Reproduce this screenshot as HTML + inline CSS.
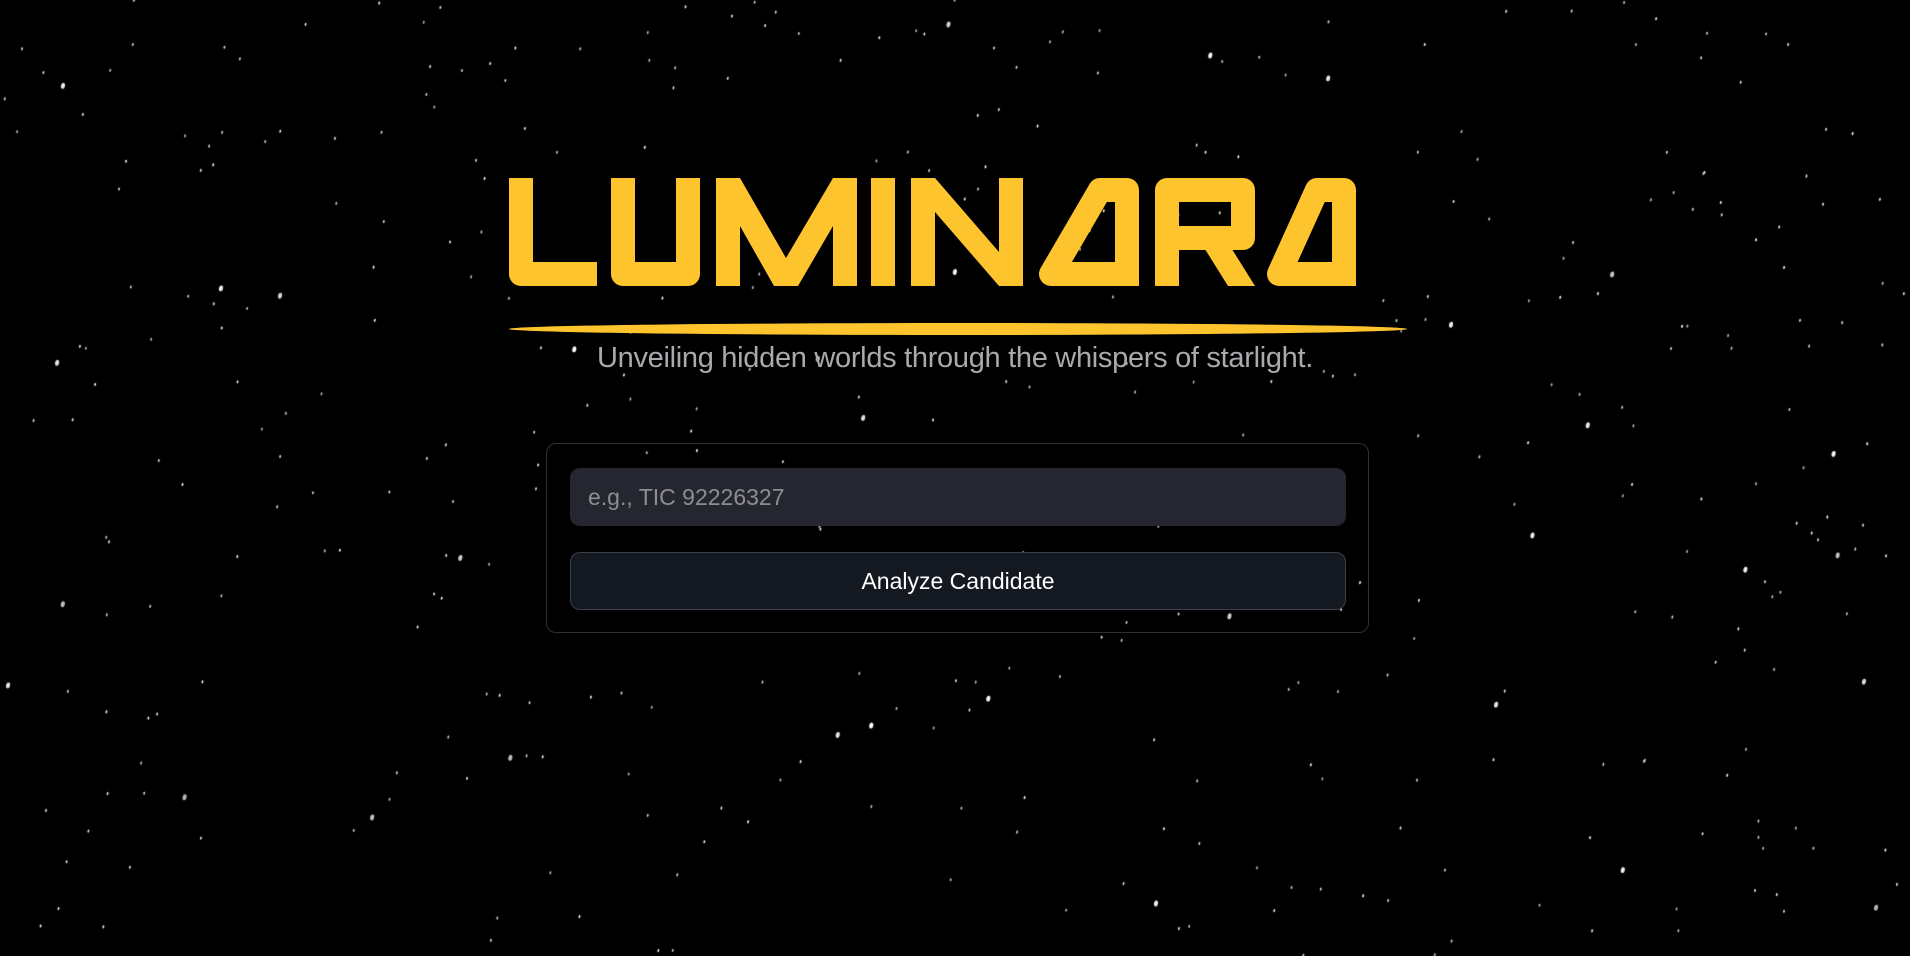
<!DOCTYPE html>
<html><head><meta charset="utf-8"><style>
html,body{margin:0;padding:0;background:#000;width:1910px;height:956px;overflow:hidden;font-family:"Liberation Sans",Roboto,sans-serif}
canvas{position:absolute;left:0;top:0}
.sub{position:absolute;left:0;width:1910px;top:342px;text-align:center;color:#a9a9ae;font-size:29px;letter-spacing:-0.3px}
.card{position:absolute;left:546px;top:443px;width:821px;height:188px;border:1px solid #2f2f33;border-radius:10px}
.inp{position:absolute;left:23px;top:24px;width:776px;height:58px;background:#262630;border-radius:10px;color:#8d8d94;font-size:23px;line-height:58px;padding-left:18px;box-sizing:border-box}
.btn{position:absolute;left:23px;top:108px;width:776px;height:58px;background:#131821;border:1px solid #3a3f48;border-radius:10px;box-sizing:border-box;color:#fff;font-size:23px;line-height:56px;text-align:center}
</style></head><body>
<canvas id="c" width="1910" height="956"></canvas>
<svg style="position:absolute;left:0;top:0" width="1910" height="956" viewBox="0 0 1910 956">
<g fill="none" stroke="#fec42e" stroke-width="24" stroke-linejoin="round">
<path d="M521 178 V274 H597"/>
<path d="M623 178 V274 H688 V178"/>
<path d="M883 178 V286"/>
<path d="M1127 286 V190 H1100 L1051 274 H1127"/>
<path d="M1167 286 V190 H1243 V238 H1167"/>
<path d="M1344 286 V190 H1317 L1279 274 H1344"/>
</g>
<g fill="#fec42e">
<polygon points="716,286 716,178 740,178 786,258 833,178 857,178 857,286 833,286 833,226 798,286 774,286 740,226 740,286"/>
<polygon points="911,286 911,178 935,178 999,252 999,178 1023,178 1023,286 999,286 935,212 935,286"/>
<polygon points="1203,246 1230,246 1255,286 1228,286"/>
<ellipse cx="958" cy="329" rx="449" ry="6"/>
</g>
</svg>
<div class="sub">Unveiling hidden worlds through the whispers of starlight.</div>
<div class="card"><div class="inp">e.g., TIC 92226327</div><div class="btn">Analyze Candidate</div></div>
<script>
var c=document.getElementById('c').getContext('2d');var s=12345;function r(){s=(s*16807)%2147483647;return s/2147483647;}
for(var i=0;i<420;i++){var x=r()*1910,y=r()*956,sz=r();c.fillStyle='rgba(255,255,255,'+(0.7+r()*0.3)+')';c.beginPath();c.ellipse(x,y,sz<0.92?0.9:2,sz<0.92?1.6:3,0.2,0,6.3);c.fill();}
</script>
</body></html>
